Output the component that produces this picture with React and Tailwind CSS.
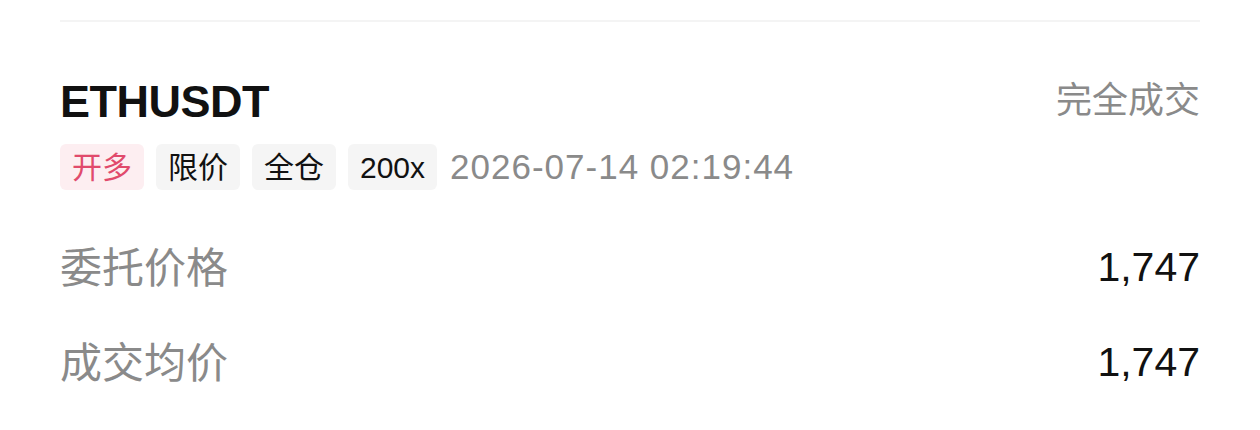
export default function App() {
  const tags = ['限价', '全仓', '200x']

  return (
    <div className="h-[430px] w-[1260px] bg-white px-[60px] pt-[20px] font-['Liberation_Sans','Noto_Sans_CJK_SC',sans-serif]">
      <div className="h-[2px] bg-[#f4f4f4]" />

      <div className="mt-[49px] flex h-[60px] items-center justify-between">
        <h1 className="text-[45px] font-bold leading-none tracking-[-0.5px] text-[#111]">ETHUSDT</h1>
        <span className="text-[36px] leading-none text-[#8a8a8a]">完全成交</span>
      </div>

      <div className="mt-[10px] flex items-center gap-[12px]">
        <span className="flex h-[46px] items-center rounded-[6px] bg-[#fdeef1] px-3 text-[30px] text-[#e14a6c]">
          开多
        </span>
        {tags.map((t) => (
          <span
            key={t}
            className="flex h-[46px] items-center rounded-[6px] bg-[#f5f5f5] px-3 text-[30px] text-[#111]"
          >
            {t}
          </span>
        ))}
        <span className="ml-px text-[35px] tracking-[1px] text-[#8a8a8a]">2026-07-14 02:19:44</span>
      </div>

      <div className="mt-[27px]">
        <div className="flex h-[95px] items-center justify-between">
          <span className="text-[42px] text-[#8a8a8a]">委托价格</span>
          <span className="text-[41px] text-[#111]">1,747</span>
        </div>
        <div className="flex h-[95px] items-center justify-between">
          <span className="text-[42px] text-[#8a8a8a]">成交均价</span>
          <span className="text-[41px] text-[#111]">1,747</span>
        </div>
      </div>
    </div>
  )
}
